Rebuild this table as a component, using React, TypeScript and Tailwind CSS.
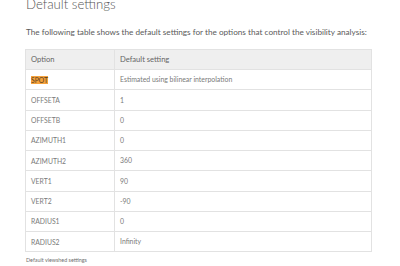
const rows: [string, string][] = [
  ['SPOT', 'Estimated using bilinear interpolation'],
  ['OFFSETA', '1'],
  ['OFFSETB', '0'],
  ['AZIMUTH1', '0'],
  ['AZIMUTH2', '360'],
  ['VERT1', '90'],
  ['VERT2', '-90'],
  ['RADIUS1', '0'],
  ['RADIUS2', 'Infinity'],
];

export default function App() {
  return (
    <div className="w-[400px] h-[266px] overflow-hidden bg-white text-[#6a6a6a] font-['Lato',sans-serif]">
      <div className="pl-[26px] pr-[28px]">
        <h2 className="-mt-[3px] text-[13.2px] leading-[15px] font-light text-[#555]">
          Default settings
        </h2>
        <p className="mt-[15px] text-[8.2px] leading-[10px] text-[#5a5a5a]">
          The following table shows the default settings for the options that control the visibility analysis:
        </p>
        <table className="mt-[12px] -ml-[1px] w-[347px] border-collapse border border-[#e2e2e2] text-left">
          <thead>
            <tr className="bg-[#efefef]">
              <th className="w-[89px] h-[20px] px-[5px] py-0 border border-[#e2e2e2] font-normal text-[7.6px] text-[#666]">
                Option
              </th>
              <th className="h-[20px] px-[5px] py-0 border border-[#e2e2e2] font-normal text-[7.6px] text-[#666]">
                Default setting
              </th>
            </tr>
          </thead>
          <tbody>
            {rows.map(([opt, val]) => (
              <tr key={opt}>
                <td className="h-[20.25px] px-[5px] py-0 border border-[#e2e2e2] text-[6.8px] text-[#7a7a7a]">
                  {opt === 'SPOT' ? (
                    <span className="bg-[#f5a23c] text-[#5a4020]">{opt}</span>
                  ) : (
                    opt
                  )}
                </td>
                <td className="h-[20.25px] px-[5px] py-0 border border-[#e2e2e2] text-[6.9px] text-[#7a7a7a]">
                  {val}
                </td>
              </tr>
            ))}
          </tbody>
        </table>
        <p className="mt-[4px] text-[5.4px] leading-[8px] text-[#6f6f6f]">Default viewshed settings</p>
      </div>
    </div>
  );
}
